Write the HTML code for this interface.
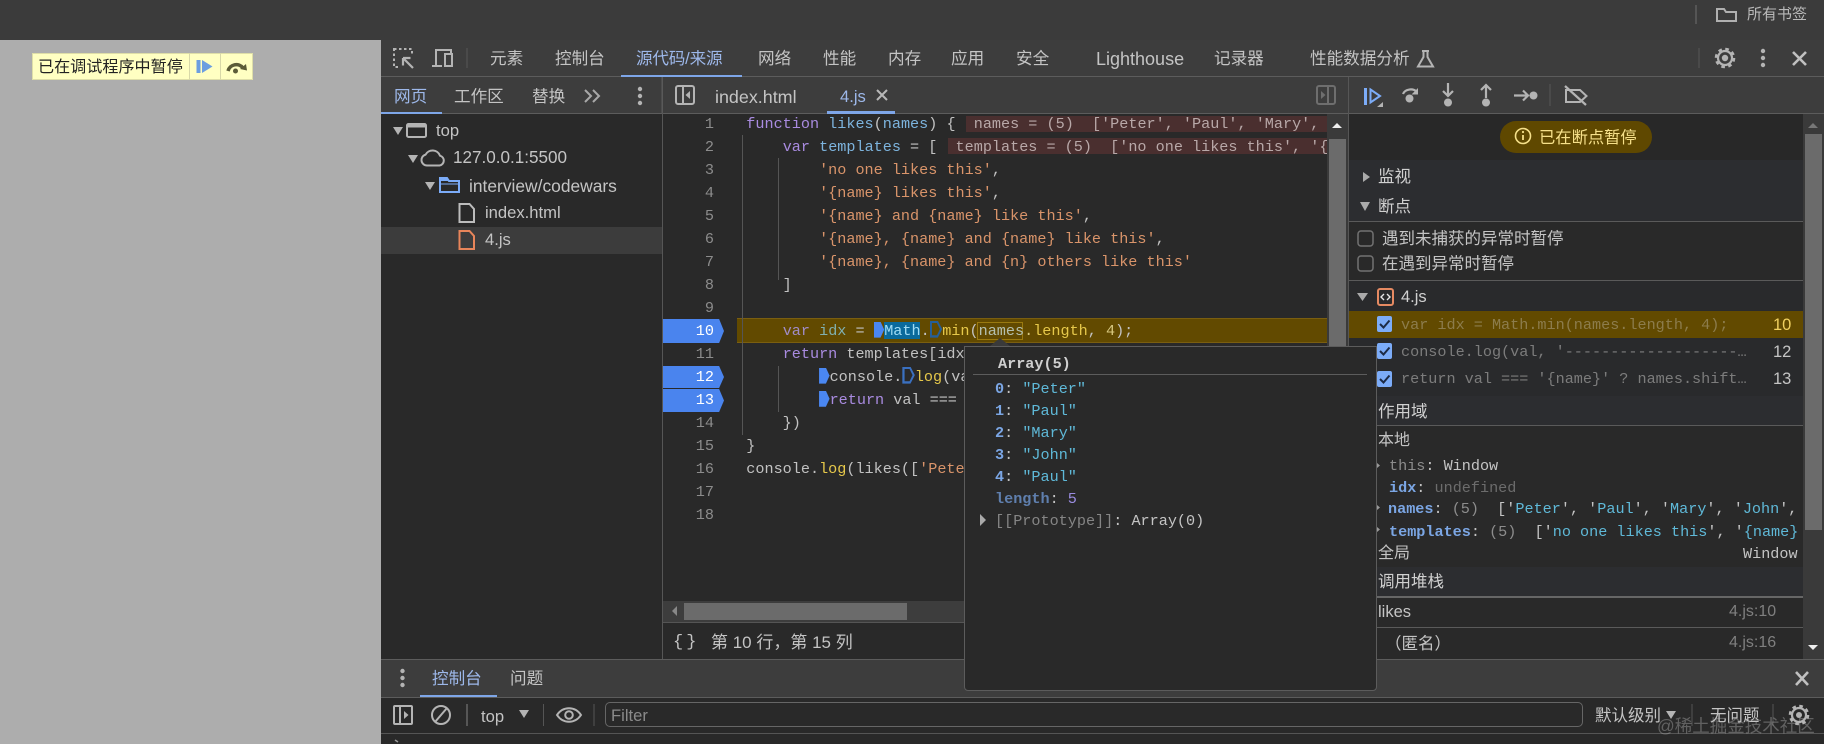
<!DOCTYPE html>
<html lang="zh">
<head>
<meta charset="utf-8">
<title>DevTools</title>
<style>
html,body{margin:0;padding:0;width:1824px;height:744px;overflow:hidden;background:#292929}
body{position:relative;font-family:"Liberation Sans","Noto Sans CJK SC",sans-serif;color:#c4c4c4;font-size:16px}
div,span{box-sizing:border-box}
.a{position:absolute}
.t{position:absolute;white-space:pre;line-height:24px;height:24px}
.m{font-family:"Liberation Mono","DejaVu Sans Mono",monospace;font-size:15.17px}
#code{position:absolute;left:663px;top:112.5px;width:664px;font-family:"Liberation Mono","DejaVu Sans Mono",monospace;font-size:15.17px;color:#c2c2c2}
.l{position:relative;height:23.03px;line-height:23.03px;white-space:pre;padding-left:83.3px;overflow:hidden}
.n{position:absolute;left:0;width:51px;text-align:right;color:#8c8c8c}
.k{color:#a98be0}.v{color:#7db4de}.s{color:#d9946a}.y{color:#e6c84a}
.b{display:inline-block;width:10.5px;height:16px;vertical-align:-3px;background:#4a87f2;clip-path:polygon(0 0,65% 0,100% 50%,65% 100%,0 100%)}
.bh{display:inline-block;width:12.5px;height:17px;vertical-align:-3px;background:#245f9a;clip-path:polygon(0 0,65% 0,100% 50%,65% 100%,0 100%,0 0,18% 14%,18% 86%,58% 86%,82% 50%,58% 14%,18% 14%)}
.bp{position:absolute;left:663px;width:61px;background:#4a84ee;clip-path:polygon(0 0,92% 0,100% 50%,92% 100%,0 100%)}
.sec{background:#2c2d30;position:absolute;left:1349px;width:454px}
.pr{position:absolute;left:995px;white-space:pre;line-height:22px;height:22px;font-family:"Liberation Mono","DejaVu Sans Mono",monospace;font-size:15.17px}
.i{color:#7ba6e4;font-weight:bold}
.q{color:#5fb9d8}
</style>
</head>
<body>
<!-- browser top bar -->
<div class="a" style="left:0;top:0;width:1824px;height:40px;background:#3b3b3b"></div>
<div class="a" style="left:1695px;top:5px;width:2px;height:19px;background:#555"></div>
<div class="t" style="left:1747px;top:3px;font-size:15px;color:#b9b9b9">所有书签</div>

<!-- page -->
<div class="a" style="left:0;top:40px;width:381px;height:704px;background:#adadad"></div>
<div class="a" style="left:32px;top:53px;width:221px;height:27px;background:#ffffc2;border:1px solid #dedea8"></div>
<div class="a" style="left:189px;top:53px;width:1px;height:27px;background:#d8d8a8"></div>
<div class="a" style="left:220px;top:53px;width:1px;height:27px;background:#d8d8a8"></div>
<div class="t" style="left:38px;top:55px;font-size:16.1px;color:#222">已在调试程序中暂停</div>

<!-- devtools toolbars -->
<div class="a" style="left:381px;top:40px;width:1443px;height:36px;background:#3d3d3d"></div>
<div class="a" style="left:381px;top:76px;width:1443px;height:1px;background:#5c5c5c"></div>
<div class="a" style="left:381px;top:77px;width:1443px;height:36px;background:#3d3d3d"></div>
<div class="a" style="left:381px;top:113px;width:1443px;height:1px;background:#5c5c5c"></div>

<div class="t" style="left:490px;top:47px;font-size:16.6px">元素</div>
<div class="t" style="left:555px;top:47px;font-size:16.6px">控制台</div>
<div class="t" style="left:636px;top:47px;font-size:16.6px;color:#9db8ea;letter-spacing:-.2px">源代码/来源</div>
<div class="a" style="left:621px;top:75px;width:121px;height:2px;background:#7ea6e8"></div>
<div class="t" style="left:758px;top:47px;font-size:16.6px">网络</div>
<div class="t" style="left:823px;top:47px;font-size:16.6px">性能</div>
<div class="t" style="left:888px;top:47px;font-size:16.6px">内存</div>
<div class="t" style="left:951px;top:47px;font-size:16.6px">应用</div>
<div class="t" style="left:1016px;top:47px;font-size:16.6px">安全</div>
<div class="t" style="left:1096px;top:47px;font-size:18px">Lighthouse</div>
<div class="t" style="left:1214px;top:47px;font-size:16.6px">记录器</div>
<div class="t" style="left:1310px;top:47px;font-size:16.6px">性能数据分析</div>

<!-- second row -->
<div class="t" style="left:394px;top:85px;font-size:16.6px;color:#9db8ea">网页</div>
<div class="a" style="left:381px;top:112px;width:61px;height:2px;background:#7ea6e8"></div>
<div class="t" style="left:454px;top:85px;font-size:16.6px">工作区</div>
<div class="t" style="left:532px;top:85px;font-size:16.6px">替换</div>
<div class="t" style="left:715px;top:85px;font-size:17.9px">index.html</div>
<div class="t" style="left:840px;top:85px;font-size:16.6px;color:#9db8ea">4.js</div>
<div class="a" style="left:827px;top:111px;width:68px;height:3px;background:#7ea6e8"></div>

<!-- navigator -->
<div class="a" style="left:381px;top:114px;width:281px;height:545px;background:#292929"></div>
<div class="a" style="left:381px;top:227px;width:281px;height:27px;background:#3c3c3c"></div>
<div class="a" style="left:662px;top:77px;width:1px;height:582px;background:#565656"></div>
<div class="t" style="left:436px;top:119px;font-size:16.6px">top</div>
<div class="t" style="left:453px;top:146px;font-size:17.1px">127.0.0.1:5500</div>
<div class="t" style="left:469px;top:174px;font-size:17.4px">interview/codewars</div>
<div class="t" style="left:485px;top:201px;font-size:16.6px">index.html</div>
<div class="t" style="left:485px;top:228px;font-size:16.6px">4.js</div>

<!-- editor -->
<div class="a" style="left:663px;top:114px;width:664px;height:487px;background:#292929"></div>
<div class="a" style="left:1327px;top:114px;width:21px;height:487px;background:#3a3a3a"></div>
<div class="a" style="left:1329px;top:139px;width:17px;height:207px;background:#6b6b6b"></div>
<div class="a" style="left:737px;top:318px;width:590px;height:25px;background:#624a00;border-top:1px solid #7a5e10;border-bottom:1px solid #7a5e10"></div>
<div class="bp" style="top:319px;height:24px"></div>
<div class="bp" style="top:366px;height:22px"></div>
<div class="bp" style="top:389px;height:23px"></div>
<div class="a" style="left:742px;top:135px;width:1px;height:300px;background:#555"></div>
<div class="a" style="left:778px;top:158px;width:1px;height:122px;background:#555"></div>
<div class="a" style="left:778px;top:366px;width:1px;height:46px;background:#555"></div>
<div class="a" style="left:966px;top:116px;width:361px;height:16px;background:#4a2f2f"></div>
<div class="a" style="left:948px;top:138px;width:379px;height:16px;background:#4a2f2f"></div>
<div class="a" style="left:884px;top:322px;width:36px;height:17px;background:#0a6a9c"></div>
<div class="a" style="left:977px;top:322px;width:46px;height:18px;border:1px solid #9a7a10"></div>
<div id="code">
<div class="l"><span class="n">1</span><span class="k">function</span> <span class="v">likes</span>(<span class="v">names</span>) { <span style="color:#b8a8a8"> names = (5)  ['Peter', 'Paul', 'Mary', '</span></div>
<div class="l"><span class="n">2</span>    <span class="k">var</span> <span class="v">templates</span> = [ <span style="color:#b8a8a8"> templates = (5)  ['no one likes this', '{n</span></div>
<div class="l"><span class="n">3</span>        <span class="s">'no one likes this'</span>,</div>
<div class="l"><span class="n">4</span>        <span class="s">'{name} likes this'</span>,</div>
<div class="l"><span class="n">5</span>        <span class="s">'{name} and {name} like this'</span>,</div>
<div class="l"><span class="n">6</span>        <span class="s">'{name}, {name} and {name} like this'</span>,</div>
<div class="l"><span class="n">7</span>        <span class="s">'{name}, {name} and {n} others like this'</span></div>
<div class="l"><span class="n">8</span>    ]</div>
<div class="l"><span class="n">9</span></div>
<div class="l"><span class="n" style="color:#fff">10</span>    <span class="k" style="color:#a08cc8">var</span> <span style="color:#80b0b0">idx</span> = <span class="b"></span><span style="color:#9fdcf5">Math</span>.<span class="bh"></span><span class="y">min</span>(<span style="color:#b4c0b0">names</span><span style="color:#d8c880">.</span><span class="y">length</span>, <span style="color:#d8c880">4</span>);</div>
<div class="l"><span class="n">11</span>    <span class="k">return</span> templates[idx].replace(/{name}|{n}/g, function (val) {</div>
<div class="l"><span class="n" style="color:#fff">12</span>        <span class="b"></span>console.<span class="bh" style="background:#3a70c0"></span><span class="y">log</span>(val</div>
<div class="l"><span class="n" style="color:#fff">13</span>        <span class="b"></span><span class="k">return</span> val ===</div>
<div class="l"><span class="n">14</span>    })</div>
<div class="l"><span class="n">15</span>}</div>
<div class="l"><span class="n">16</span>console.<span class="y">log</span>(likes([<span class="s">'Peter</span></div>
<div class="l"><span class="n">17</span></div>
<div class="l"><span class="n">18</span></div>
</div>
<!-- editor hscroll + status -->
<div class="a" style="left:663px;top:601px;width:685px;height:21px;background:#3d3d3d"></div>
<div class="a" style="left:684px;top:603px;width:223px;height:17px;background:#6b6b6b"></div>
<div class="a" style="left:663px;top:622px;width:685px;height:1px;background:#555"></div>
<div class="t" style="left:673px;top:631px;font-size:17px;font-family:'Liberation Mono',monospace;letter-spacing:3px">{}</div>
<div class="t" style="left:711px;top:631px;font-size:17px">第 10 行，第 15 列</div>

<!-- sidebar -->
<div class="a" style="left:1348px;top:77px;width:1px;height:583px;background:#565656"></div>
<div class="a" style="left:1349px;top:114px;width:454px;height:46px;background:#282828"></div>
<div class="sec" style="top:160px;height:61px"></div>
<div class="a" style="left:1349px;top:221px;width:454px;height:1px;background:#5a5a5a"></div>
<div class="a" style="left:1349px;top:222px;width:454px;height:58px;background:#292929"></div>
<div class="a" style="left:1349px;top:280px;width:454px;height:1px;background:#5a5a5a"></div>
<div class="a" style="left:1349px;top:281px;width:454px;height:115px;background:#292a2c"></div>
<div class="a" style="left:1349px;top:311px;width:454px;height:27px;background:#624a00"></div>
<div class="sec" style="top:396px;height:29px"></div>
<div class="a" style="left:1349px;top:425px;width:454px;height:1px;background:#5a5a5a"></div>
<div class="a" style="left:1349px;top:426px;width:454px;height:141px;background:#292929"></div>
<div class="sec" style="top:567px;height:30px"></div>
<div class="a" style="left:1349px;top:596px;width:454px;height:2px;background:#666"></div>
<div class="a" style="left:1349px;top:598px;width:454px;height:61px;background:#292929"></div>
<div class="a" style="left:1349px;top:627px;width:454px;height:1px;background:#5a5a5a"></div>
<div class="a" style="left:1803px;top:114px;width:21px;height:546px;background:#3a3a3a"></div>
<div class="a" style="left:1805px;top:134px;width:17px;height:396px;background:#6b6b6b"></div>

<div class="a" style="left:1500px;top:121px;width:152px;height:32px;border-radius:16px;background:#5f4800"></div>
<div class="t" style="left:1539px;top:126px;font-size:16.3px;color:#f6e08a">已在断点暂停</div>
<div class="t" style="left:1378px;top:165px;font-size:16.5px;color:#d0d0d0">监视</div>
<div class="t" style="left:1378px;top:195px;font-size:16.5px;color:#d0d0d0">断点</div>
<div class="t" style="left:1382px;top:227px;font-size:16.5px">遇到未捕获的异常时暂停</div>
<div class="t" style="left:1382px;top:252px;font-size:16.5px">在遇到异常时暂停</div>
<div class="t" style="left:1401px;top:285px;font-size:16.5px;color:#d0d0d0">4.js</div>
<div class="t m" style="left:1401px;top:313px;color:#8c7c4c">var idx = Math.min(names.length, 4);</div>
<div class="t m" style="left:1401px;top:340px;color:#7c7c7c">console.log(val, '-------------------…</div>
<div class="t m" style="left:1401px;top:367px;color:#7c7c7c">return val === '{name}' ? names.shift…</div>
<div class="t" style="left:1773px;top:313px;font-size:16.5px;color:#f0d060">10</div>
<div class="t" style="left:1773px;top:340px;font-size:16.5px">12</div>
<div class="t" style="left:1773px;top:367px;font-size:16.5px">13</div>
<div class="t" style="left:1378px;top:400px;font-size:16.5px;color:#d0d0d0">作用域</div>
<div class="t" style="left:1378px;top:429px;font-size:16px">本地</div>
<div class="t m" style="left:1389px;top:454px"><span style="color:#8c8c8c">this</span>: Window</div>
<div class="t m" style="left:1389px;top:476px"><span class="i">idx</span>: <span style="color:#6c6c6c">undefined</span></div>
<div class="t m" style="left:1388px;top:497px"><span class="i">names</span>: <span style="color:#8c8c8c">(5)</span>  ['<span class="q">Peter</span>', '<span class="q">Paul</span>', '<span class="q">Mary</span>', '<span class="q">John</span>',</div>
<div class="t m" style="left:1389px;top:520px"><span class="i">templates</span>: <span style="color:#8c8c8c">(5)</span>  ['<span class="q">no one likes this</span>', '<span class="q">{name}</span></div>
<div class="t" style="left:1378px;top:542px;font-size:16px">全局</div>
<div class="t m" style="left:1743px;top:542px">Window</div>
<div class="t" style="left:1378px;top:570px;font-size:16.5px;color:#d0d0d0">调用堆栈</div>
<div class="t" style="left:1378px;top:600px;font-size:16.5px">likes</div>
<div class="t" style="left:1729px;top:600px;font-size:16px;color:#7f7f7f">4.js:10</div>
<div class="t" style="left:1385px;top:632px;font-size:16.5px">（匿名）</div>
<div class="t" style="left:1729px;top:631px;font-size:16px;color:#7f7f7f">4.js:16</div>

<!-- console drawer -->
<div class="a" style="left:381px;top:659px;width:1443px;height:1px;background:#5c5c5c"></div>
<div class="a" style="left:381px;top:660px;width:1443px;height:37px;background:#3d3d3d"></div>
<div class="a" style="left:381px;top:697px;width:1443px;height:1px;background:#5c5c5c"></div>
<div class="a" style="left:381px;top:698px;width:1443px;height:35px;background:#292929"></div>
<div class="a" style="left:381px;top:733px;width:1443px;height:1px;background:#555"></div>
<div class="t" style="left:432px;top:667px;font-size:16.6px;color:#9db8ea">控制台</div>
<div class="a" style="left:420px;top:695px;width:77px;height:2px;background:#7ea6e8"></div>
<div class="t" style="left:510px;top:667px;font-size:16.6px">问题</div>
<div class="t" style="left:481px;top:705px;font-size:16.6px">top</div>
<div class="a" style="left:605px;top:702px;width:978px;height:25px;border:1px solid #666;border-radius:5px"></div>
<div class="t" style="left:611px;top:704px;font-size:16.6px;color:#8a8a8a">Filter</div>
<div class="t" style="left:1595px;top:704px;font-size:16.5px">默认级别</div>
<div class="t" style="left:1710px;top:704px;font-size:16.5px">无问题</div>

<!-- popover -->
<div class="a" style="left:964px;top:346px;width:413px;height:345px;background:#292929;border:1px solid #5c5c5c;border-radius:0 0 4px 4px"></div>
<div class="a" style="left:973px;top:374px;width:394px;height:1px;background:#5c5c5c"></div>
<div class="pr" style="left:998px;top:353px;font-weight:bold;color:#cfcfcf">Array(5)</div>
<div class="pr" style="top:378px"><span class="i">0</span>: <span class="q">"Peter"</span></div>
<div class="pr" style="top:400px"><span class="i">1</span>: <span class="q">"Paul"</span></div>
<div class="pr" style="top:422px"><span class="i">2</span>: <span class="q">"Mary"</span></div>
<div class="pr" style="top:444px"><span class="i">3</span>: <span class="q">"John"</span></div>
<div class="pr" style="top:466px"><span class="i">4</span>: <span class="q">"Paul"</span></div>
<div class="pr" style="top:488px"><span style="color:#5f7fae;font-weight:bold">length</span>: <span style="color:#9a8ce0">5</span></div>
<div class="pr" style="top:510px"><span style="color:#858585">[[Prototype]]</span>: Array(0)</div>

<!-- icons -->
<svg class="a" style="left:0;top:0" width="1824" height="744" viewBox="0 0 1824 744" fill="none" stroke="#b4b4b4" stroke-width="2">
  <!-- bookmarks folder -->
  <path d="M1717 21V9h7l2 3h10v9z" stroke="#b0b0b0"/>
  <!-- badge icons -->
  <rect x="196.500" y="60" width="4" height="13" fill="#6c9ee0" stroke="none"/>
  <path d="M202 60l10.500 6.500-10.500 6.500z" fill="#6c9ee0" stroke="none"/>
  <path d="M228 71a8.500 8.500 0 0 1 15-3" stroke="#5c5c38" stroke-width="3.500"/>
  <path d="M240 69l7 1.500-1-6.500z" fill="#5c5c38" stroke="none"/>
  <circle cx="235.500" cy="71" r="2.500" fill="#5c5c38" stroke="none"/>
  <!-- inspect -->
  <rect x="394" y="49" width="18" height="18" stroke-dasharray="2.500 2.500"/>
  <rect x="400" y="56" width="14" height="13" fill="#3d3d3d" stroke="none"/>
  <path d="M403 58l10 10M403 58v7.500M403 58h7.500" stroke="#b4b4b4" stroke-width="2.200"/>
  <!-- device -->
  <path d="M436 65V50h15v3M432 66h10"/>
  <rect x="445" y="54" width="7" height="12"/>
  <path d="M467 48v20" stroke="#585858" stroke-width="1"/>
  <!-- flask -->
  <path d="M1422 51h7M1423.500 51v6l-5.500 9.500h15l-5.500-9.500v-6"/>
  <!-- top right -->
  <path d="M1699 48v20" stroke="#585858" stroke-width="1"/>
  <circle cx="1725" cy="58" r="7" stroke-width="2.200"/>
  <circle cx="1725" cy="58" r="9" stroke-width="2.600" stroke-dasharray="3.600 3.470"/>
  <circle cx="1725" cy="58" r="3.200" fill="#b4b4b4" stroke="none"/>
  <g fill="#b4b4b4" stroke="none"><circle cx="1763" cy="51" r="2.200"/><circle cx="1763" cy="58" r="2.200"/><circle cx="1763" cy="65" r="2.200"/></g>
  <path d="M1793 52l13 13M1806 52l-13 13" stroke="#c0c0c0" stroke-width="2.600"/>
  <!-- nav row -->
  <path d="M585 90l6 6-6 6M593 90l6 6-6 6" stroke="#a8a8a8"/>
  <g fill="#b4b4b4" stroke="none"><circle cx="640" cy="89" r="2.200"/><circle cx="640" cy="96" r="2.200"/><circle cx="640" cy="103" r="2.200"/></g>
  <path d="M662 77v36" stroke="#5c5c5c" stroke-width="1"/>
  <!-- panel toggles -->
  <rect x="676" y="86" width="18" height="18" rx="2"/>
  <path d="M683 86v18"/>
  <path d="M690 91l-4.500 4 4.500 4z" fill="#b4b4b4" stroke="none"/>
  <path d="M877 90l10 10M887 90l-10 10" stroke="#b8b8b8"/>
  <rect x="1317" y="86" width="18" height="18" rx="2" stroke="#6e6e6e"/>
  <path d="M1328 86v18" stroke="#6e6e6e"/>
  <path d="M1321 91l4.500 4-4.500 4z" fill="#6e6e6e" stroke="none"/>
  <!-- debug icons -->
  <rect x="1364" y="88" width="3" height="17" fill="#7cacf8" stroke="none"/>
  <path d="M1370.500 89.500l9.500 6.500-9.500 6.500z" stroke="#7cacf8" stroke-width="2"/>
  <path d="M1383 102v5h-6z" fill="#b4b4b4" stroke="none"/>
  <path d="M1403 94a8 6.500 0 0 1 14-2" stroke-width="2.200"/>
  <path d="M1418 88v6.500h-6.500z" fill="#b4b4b4" stroke="none"/>
  <circle cx="1409.500" cy="98.500" r="4" fill="#b4b4b4" stroke="none"/>
  <path d="M1448 83v13M1443 91l5 5 5-5" stroke-width="2.200"/>
  <circle cx="1448" cy="102.500" r="4" fill="#b4b4b4" stroke="none"/>
  <path d="M1486 98V85M1481 90l5-5 5 5" stroke-width="2.200"/>
  <circle cx="1486" cy="102.500" r="4" fill="#b4b4b4" stroke="none"/>
  <path d="M1514 95.500h14M1523 90.500l5 5-5 5" stroke-width="2.200"/>
  <circle cx="1533.500" cy="95.500" r="4" fill="#b4b4b4" stroke="none"/>
  <path d="M1550 84v22" stroke="#585858" stroke-width="1"/>
  <path d="M1566 90h14l6.500 6-6.500 6h-14z" stroke-width="2"/>
  <path d="M1565 86l21 19" stroke-width="2.200"/>
  <!-- nav tree -->
  <path d="M393 127h10l-5 8z" fill="#b4b4b4" stroke="none"/>
  <rect x="407" y="124" width="19" height="13" rx="1.500"/>
  <path d="M407 126h19" stroke-width="3"/>
  <path d="M408 155h10l-5 8z" fill="#b4b4b4" stroke="none"/>
  <path d="M427 165.500h12.500a5 5 0 0 0 .5-9.800a8 8 0 0 0-14.500-1a5.500 5.500 0 0 0 1.500 10.800z"/>
  <path d="M425 182h10l-5 8z" fill="#b4b4b4" stroke="none"/>
  <path d="M440 192v-14h7l2 3h10v11z" stroke="#7cacf8"/>
  <path d="M440 184h19" stroke="#7cacf8" stroke-width="1"/>
  <path d="M441 178h6l2 3h-8z" fill="#7cacf8" stroke="none"/>
  <path d="M459.500 204h10l4.500 5v13h-14.500z" stroke="#bcbcbc"/>
  <path d="M459.500 231h10l4.500 5v13h-14.500z" stroke="#e8855a"/>
  <!-- code scroll arrows -->
  <path d="M1332 128h10l-5-5z" fill="#eee" stroke="none"/>
  <path d="M1808 128h10l-5-5z" fill="#777" stroke="none"/>
  <path d="M1808 645h10l-5 5z" fill="#eee" stroke="none"/>
  <path d="M677 606v10l-5-5z" fill="#888" stroke="none"/>
  <!-- sidebar -->
  <circle cx="1523" cy="136" r="7.500" stroke="#f6e08a" stroke-width="1.600"/>
  <path d="M1523 135v5" stroke="#f6e08a" stroke-width="1.800"/>
  <circle cx="1523" cy="132" r="1.100" fill="#f6e08a" stroke="none"/>
  <path d="M1363 172l7 5-7 5z" fill="#aaa" stroke="none"/>
  <path d="M1360 202h10l-5 9z" fill="#aaa" stroke="none"/>
  <rect x="1358" y="231" width="15" height="15" rx="3" stroke="#727272" stroke-width="1.500"/>
  <rect x="1358" y="256" width="15" height="15" rx="3" stroke="#727272" stroke-width="1.500"/>
  <path d="M1357 293h11l-5.500 8z" fill="#aaa" stroke="none"/>
  <rect x="1378" y="289" width="15" height="16" rx="2" stroke="#e58a62"/>
  <path d="M1384 294l-3 3 3 3M1387 294l3 3-3 3" stroke="#e6e6e6" stroke-width="1.400"/>
  <g stroke="none" fill="#7cacf8">
    <rect x="1377" y="316" width="15" height="16" rx="2"/>
    <rect x="1377" y="343" width="15" height="16" rx="2"/>
    <rect x="1377" y="371" width="15" height="16" rx="2"/>
  </g>
  <path d="M1380 324l3.500 3.500 6-7M1380 351l3.500 3.500 6-7M1380 379l3.500 3.500 6-7" stroke="#1d2b46" stroke-width="2"/>
  <g fill="#999" stroke="none">
    <path d="M1377 463l3 2.500-3 2.500zM1377 505l3 2.500-3 2.500zM1377 527l3 2.500-3 2.500z"/>
  </g>
  <!-- popover -->
  <path d="M990 346l10-8 10 8z" fill="#3a3a3a" stroke="none"/>
  <path d="M980 514l6 6-6 6z" fill="#aaa" stroke="none"/>
  <!-- drawer -->
  <g fill="#b4b4b4" stroke="none"><circle cx="402.500" cy="671" r="2.200"/><circle cx="402.500" cy="678" r="2.200"/><circle cx="402.500" cy="685" r="2.200"/></g>
  <path d="M1796 672l12 13M1808 672l-12 13" stroke="#c0c0c0" stroke-width="2.600"/>
  <rect x="394" y="706" width="18" height="18" rx="1"/>
  <path d="M400 706v18"/>
  <path d="M404 711l4.500 4-4.500 4z" fill="#b4b4b4" stroke="none"/>
  <circle cx="441" cy="715" r="9"/>
  <path d="M435 722l12-14"/>
  <path d="M467 704v22" stroke="#666" stroke-width="1.500"/>
  <path d="M519 710h10l-5 8z" fill="#b4b4b4" stroke="none"/>
  <path d="M543.500 704v22" stroke="#555" stroke-width="1"/>
  <path d="M557 715c6-9 18-9 24 0c-6 9-18 9-24 0z"/>
  <circle cx="569" cy="715" r="3.800"/>
  <path d="M594 704v22" stroke="#555" stroke-width="1"/>
  <path d="M1666 711h10l-5 8z" fill="#b4b4b4" stroke="none"/>
  <path d="M1692 704v22M1773 704v22" stroke="#555" stroke-width="1"/>
  <circle cx="1799" cy="715" r="7" stroke-width="2.200"/>
  <circle cx="1799" cy="715" r="9" stroke-width="2.600" stroke-dasharray="3.600 3.470"/>
  <circle cx="1799" cy="715" r="3" fill="#b4b4b4" stroke="none"/>
  <path d="M395 740l3 2" stroke="#999" stroke-width="1.500"/>
</svg>

<!-- watermark -->
<div class="t" style="left:1657px;top:714px;font-size:17.500px;color:rgba(190,190,190,.38)">@稀土掘金技术社区</div>
</body>
</html>
